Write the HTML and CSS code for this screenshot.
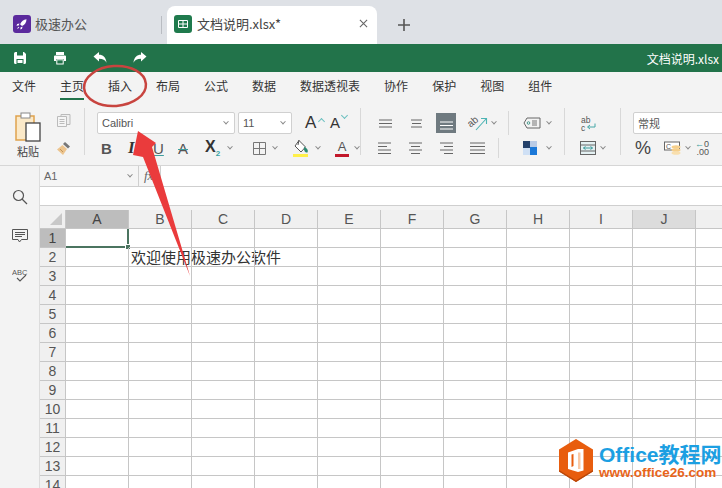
FILE: index.html
```html
<!DOCTYPE html>
<html lang="zh">
<head>
<meta charset="utf-8">
<title>文档说明.xlsx</title>
<link rel="stylesheet" href="styles.css">
</head>
<body>
<div class="app">
  <header class="tabs">
    <div class="tab-home">
      <svg class="tab-icon" viewBox="0 0 18 18"><rect width="18" height="18" rx="3" fill="#5b2a9d"/><path d="M13.5 4.2c-3 .3-5 2.2-6.400 5l1.900 1.900c2.700-1.400 4.500-3.600 4.500-6.900zM6.500 8.500l-2.300.6-.7 1.600 2.200-.1zM9.600 11.600l-.6 2.200-1.600.8.100-2.200zM5.300 11.800l-1.300 2.300 2.300-1.300z" fill="#fff"/></svg>
      <span>极速办公</span>
    </div>
    <div class="tab-sep"></div>
    <div class="tab-doc">
      <svg class="tab-icon" viewBox="0 0 18 18"><rect width="18" height="18" rx="3" fill="#1f7a4d"/><path d="M4.500 5.500h9v7h-9zM9 5.500v7M4.500 9h9" fill="none" stroke="#fff" stroke-width="1"/></svg>
      <span class="tab-title">文档说明.xlsx*</span>
      <svg class="tab-close" viewBox="0 0 10 10"><path d="M1 1l8 8M9 1l-8 8" stroke="#666" stroke-width="1.200"/></svg>
    </div>
    <svg class="tab-add" viewBox="0 0 14 14"><path d="M7 1v12M1 7h12" stroke="#555" stroke-width="1.600"/></svg>
  </header>

  <div class="quick">
    <svg class="q-icon" viewBox="0 0 14 14"><path d="M1 2.500A1.500 1.500 0 0 1 2.500 1H11l2 2v8.500a1.500 1.500 0 0 1-1.500 1.500h-9A1.500 1.500 0 0 1 1 11.500z" fill="#fff"/><rect x="4" y="1" width="6" height="3.500" fill="#22734a"/><rect x="3.500" y="8" width="7" height="5" fill="#22734a"/><rect x="4.500" y="9" width="5" height="3" fill="#fff"/></svg>
    <svg class="q-icon" viewBox="0 0 14 14"><rect x="3" y="1" width="8" height="3" fill="#fff"/><path d="M1 5.500A1 1 0 0 1 2 4.500h10a1 1 0 0 1 1 1V10h-2V8H3v2H1z" fill="#fff"/><rect x="3.800" y="8.800" width="6.400" height="4.200" fill="none" stroke="#fff"/></svg>
    <svg class="q-icon" viewBox="0 0 14 14"><path d="M0.500 5.500L6 1v2.800c4 0 7 2.400 7.500 8-1.500-3-3.500-4-7.500-4v2.700z" fill="#fff"/></svg>
    <svg class="q-icon" viewBox="0 0 14 14"><path d="M13.500 5.500L8 1v2.800c-4 0-7 2.400-7.500 8 1.500-3 3.500-4 7.500-4v2.700z" fill="#fff"/></svg>
    <span class="quick-title">文档说明.xlsx</span>
  </div>

  <nav class="menu">
    <span>文件</span>
    <span class="active">主页</span>
    <span class="strong">插入</span>
    <span>布局</span>
    <span>公式</span>
    <span>数据</span>
    <span>数据透视表</span>
    <span>协作</span>
    <span>保护</span>
    <span>视图</span>
    <span>组件</span>
  </nav>

  <section class="ribbon">
    <div class="group g-paste">
      <div class="paste">
        <svg class="paste-icon" viewBox="0 0 28 30"><path d="M2 4h18v24H2z" fill="#fbe9c8" stroke="#e0a24d" stroke-width="1.500"/><rect x="7" y="1" width="9" height="5" fill="#fff" stroke="#888"/><rect x="12" y="11" width="14" height="18" fill="#fff" stroke="#444" stroke-width="1.300"/></svg>
        <span>粘贴</span>
      </div>
      <div class="paste-side">
        <svg class="i15" viewBox="0 0 15 15"><path d="M5 1.500h9v10H5z" fill="#eee" stroke="#bbb"/><path d="M1.500 3.500h9v10h-9z" fill="#f5f5f5" stroke="#bbb"/><path d="M3.500 6.500h5M3.500 8.500h5M3.500 10.500h5" stroke="#bbb"/></svg>
        <svg class="i15" viewBox="0 0 15 15"><path d="M9 1l5 4.500-2 2-5-4.500z" fill="#777"/><path d="M6.500 4l4.500 4-4 6-6-5.500z" fill="#ecc48e"/><path d="M4 8l3 3" stroke="#c2955a"/></svg>
      </div>
    </div>
    <div class="vsep"></div>

    <div class="group g-font">
      <div class="row r-top">
        <div class="field font-name">Calibri<i class="caret"></i></div>
        <div class="field font-size">11<i class="caret"></i></div>
        <span class="grow">A<i class="grow-mark up"></i></span>
        <span class="grow small">A<i class="grow-mark down"></i></span>
      </div>
      <div class="row r-bot font-tools">
        <b class="t-b">B</b>
        <i class="t-i">I</i>
        <span class="t-u">U</span>
        <span class="t-s">A</span>
        <span class="t-x">X<sub>2</sub></span><i class="caret c-x"></i>
        <svg class="i13 t-border" viewBox="0 0 13 13"><path d="M.5.500h12v12H.5zM6.500.500v12M.5 6.500h12" fill="none" stroke="#777"/></svg><i class="caret c-b"></i>
        <svg class="t-fill" viewBox="0 0 18 18"><path d="M7 1.500l6.500 6.500-4.500 5-6-6z" fill="#fff" stroke="#555"/><path d="M7 1l-1 5" stroke="#555"/><path d="M12 8c3 1 4.500 3 3.500 5.500-2 .5-4-1.500-3.500-5.500z" fill="#2c8a73"/><rect x="1" y="15" width="15" height="3" fill="#fff04a"/></svg><i class="caret c-f"></i>
        <span class="t-color">A</span><i class="caret c-c"></i>
      </div>
    </div>
    <div class="vsep"></div>

    <div class="group g-align">
      <div class="row r-top">
        <svg class="i15 a1" viewBox="0 0 15 15"><path d="M1 4h13M1 7.500h13M1 11h13" stroke="#666"/></svg>
        <svg class="i15 a2" viewBox="0 0 15 15"><path d="M2 4h11M3 7.500h9M2 11h11" stroke="#666"/></svg>
        <span class="a-on"><svg class="i15" viewBox="0 0 15 15"><path d="M1 6h13M1 9.500h13M1 13h13" stroke="#fff"/></svg></span>
        <svg class="a-rot" viewBox="0 0 22 18"><text x="1" y="11" font-size="10" fill="#555" transform="rotate(-40 6 9)" font-family="Liberation Sans">ab</text><path d="M9 16L19 5M14 4.500h5.500V10" fill="none" stroke="#4db4b4" stroke-width="1.100"/></svg><i class="caret c-a"></i>
      </div>
      <div class="row r-bot">
        <svg class="i15 a0" viewBox="0 0 15 15"><path d="M1 2h13M1 5.500h9M1 9h13M1 12.500h13" stroke="#666"/></svg>
        <svg class="i15 a3" viewBox="0 0 15 15"><path d="M1 2h13M3 5.500h9M1 9h13M3 12.500h9" stroke="#666"/></svg>
        <svg class="i15 a3" viewBox="0 0 15 15"><path d="M1 2h13M5 5.500h9M1 9h13M5 12.500h9" stroke="#666"/></svg>
        <svg class="i15 a3" viewBox="0 0 15 15"><path d="M0 2h16M0 5.500h16M0 9h16M0 12.500h16" stroke="#666"/></svg>
        <span class="row-sep"></span>
      </div>
    </div>
    <div class="vsep v-short"></div>

    <div class="group g-cond">
      <div class="row r-top">
        <svg class="t-tag" viewBox="0 0 18 12"><path d="M4 1h13v10H4L1 6z" fill="none" stroke="#666"/><circle cx="5.500" cy="6" r="1.300" fill="none" stroke="#4a9a8e"/><path d="M9 4h5M9 6h5M9 8h5" stroke="#777"/></svg><i class="caret c-g"></i>
      </div>
      <div class="row r-bot">
        <svg class="t-sq" viewBox="0 0 14 14"><rect width="7" height="7" fill="#24416b"/><rect x="7" width="7" height="7" fill="#b9cbe6"/><rect y="7" width="7" height="7" fill="#cfe0f5"/><rect x="7" y="6" width="7" height="8" fill="#1b78d8"/></svg><i class="caret c-g2"></i>
      </div>
    </div>
    <div class="vsep"></div>

    <div class="group g-wrap">
      <div class="row r-top">
        <svg class="t-abc" viewBox="0 0 16 17"><text x="1" y="7.500" font-size="8.500" fill="#555" font-family="Liberation Sans">ab</text><text x="1" y="15.500" font-size="8.500" fill="#555" font-family="Liberation Sans">c</text><path d="M15 8.500v3.500H8M10 10l-2.500 2 2.500 2" fill="none" stroke="#45a6a6"/></svg>
      </div>
      <div class="row r-bot">
        <svg class="t-merge" viewBox="0 0 16 14"><rect x=".5" y=".5" width="15" height="13" fill="#e4f1f3" stroke="#666"/><path d="M.5 4h15M.5 10h15" stroke="#666"/><path d="M3.500 7h9M3.500 7l2-1.500M3.500 7l2 1.500M12.500 7l-2-1.500M12.500 7l-2 1.500" stroke="#3a9a9a" fill="none"/></svg><i class="caret c-g3"></i>
      </div>
    </div>
    <div class="vsep"></div>

    <div class="group g-num">
      <div class="row r-top">
        <div class="field num-format">常规</div>
      </div>
      <div class="row r-bot">
        <span class="t-pct">%</span>
        <svg class="t-cur" viewBox="0 0 17 14"><rect x=".5" y="1" width="15" height="8" fill="#fff" stroke="#666"/><text x="2" y="8" font-size="7" fill="#555" font-family="Liberation Sans">C</text><ellipse cx="12" cy="6" rx="4.500" ry="1.800" fill="#f5cf8c"/><ellipse cx="12" cy="9" rx="4.500" ry="1.800" fill="#f5cf8c"/><ellipse cx="12" cy="12" rx="4.500" ry="1.800" fill="#f9dfae"/></svg><i class="caret c-n"></i>
        <span class="t-dec"><span class="dec-top"><em>←</em>0</span><span>.00</span></span>
      </div>
    </div>
  </section>

  <main class="work">
    <aside class="side">
      <svg class="s-icon" viewBox="0 0 16 16"><circle cx="6.500" cy="6.500" r="5" fill="none" stroke="#555" stroke-width="1.200"/><path d="M10 10l5 5" stroke="#555" stroke-width="1.200"/></svg>
      <svg class="s-icon" viewBox="0 0 16 16"><path d="M.5 1.500h15v10H9.500L7.500 14 6 11.500H.5z" fill="none" stroke="#555"/><path d="M3 4.500h10M3 6.500h10M3 8.500h7" stroke="#555"/></svg>
      <svg class="s-icon" viewBox="0 0 16 16"><text x="0" y="8" font-size="7.500" fill="#555" font-family="Liberation Sans">ABC</text><path d="M5 11l3 3 6-6" fill="none" stroke="#555" stroke-width="1.100"/></svg>
    </aside>

    <div class="sheet">
      <div class="formula">
        <div class="formula-top">
          <div class="name-box">A1<i class="caret"></i></div>
          <div class="fx"><i>fx</i></div>
        </div>
        <div class="formula-body"></div>
      </div>
      <div class="band"></div>
      <table class="grid">
        <colgroup><col class="c-head"><col class="c-col"><col class="c-col"><col class="c-col"><col class="c-col"><col class="c-col"><col class="c-col"><col class="c-col"><col class="c-col"><col class="c-col"><col class="c-col"><col class="c-col"></colgroup>
        <thead>
          <tr><th class="corner"><svg class="corner-mark" viewBox="0 0 12 12"><path d="M12 0v12H0z" fill="#c8c8c8"/></svg></th><th class="sel">A</th><th>B</th><th>C</th><th>D</th><th>E</th><th>F</th><th>G</th><th>H</th><th>I</th><th class="hover">J</th><th></th></tr>
        </thead>
        <tbody>
          <tr><th class="sel">1</th><td class="active-cell"><span class="handle"></span></td><td></td><td></td><td></td><td></td><td></td><td></td><td></td><td></td><td></td><td></td></tr>
          <tr><th>2</th><td></td><td class="overflow">欢迎使用极速办公软件</td><td></td><td></td><td></td><td></td><td></td><td></td><td></td><td></td><td></td></tr>
          <tr><th>3</th><td></td><td></td><td></td><td></td><td></td><td></td><td></td><td></td><td></td><td></td><td></td></tr>
          <tr><th>4</th><td></td><td></td><td></td><td></td><td></td><td></td><td></td><td></td><td></td><td></td><td></td></tr>
          <tr><th>5</th><td></td><td></td><td></td><td></td><td></td><td></td><td></td><td></td><td></td><td></td><td></td></tr>
          <tr><th>6</th><td></td><td></td><td></td><td></td><td></td><td></td><td></td><td></td><td></td><td></td><td></td></tr>
          <tr><th>7</th><td></td><td></td><td></td><td></td><td></td><td></td><td></td><td></td><td></td><td></td><td></td></tr>
          <tr><th>8</th><td></td><td></td><td></td><td></td><td></td><td></td><td></td><td></td><td></td><td></td><td></td></tr>
          <tr><th>9</th><td></td><td></td><td></td><td></td><td></td><td></td><td></td><td></td><td></td><td></td><td></td></tr>
          <tr><th>10</th><td></td><td></td><td></td><td></td><td></td><td></td><td></td><td></td><td></td><td></td><td></td></tr>
          <tr><th>11</th><td></td><td></td><td></td><td></td><td></td><td></td><td></td><td></td><td></td><td></td><td></td></tr>
          <tr><th>12</th><td></td><td></td><td></td><td></td><td></td><td></td><td></td><td></td><td></td><td></td><td></td></tr>
          <tr><th>13</th><td></td><td></td><td></td><td></td><td></td><td></td><td></td><td></td><td></td><td></td><td></td></tr>
          <tr><th>14</th><td></td><td></td><td></td><td></td><td></td><td></td><td></td><td></td><td></td><td></td><td></td></tr>
        </tbody>
      </table>
    </div>
  </main>

  <svg class="annot" viewBox="0 0 722 488">
    <ellipse cx="115" cy="86" rx="31" ry="20" transform="rotate(-4 115 86)" fill="none" stroke="#c8443f" stroke-width="2.500"/>
    <path d="M138 131L156 143 152 147 190 276 143 157 133 155z" fill="#ea3b3c"/>
  </svg>

  <div class="mark">
    <svg class="mark-hex" viewBox="0 0 34 43"><path d="M17 0l17 10.500v22L17 43 0 32.500v-22z" fill="#e85d0e"/><path d="M17 43L0 32.500v-1.500l17 10.500 17-10.500v1.500z" fill="#b8470a"/><path d="M9 13.500L19 10h5.500v21.500L19 33 9 30V13.500zM12.500 15.500V28l2-1V15z" fill="#fff" fill-rule="evenodd"/><path d="M19 13.500h2.500v16.500H19z" fill="#f9c9a6"/></svg>
    <div class="mark-text">
      <span class="mark-name">Office教程网</span>
      <span class="mark-url">www.office26.com</span>
    </div>
  </div>
</div>
</body>
</html>
```

FILE: styles.css
```css
* { box-sizing: border-box; }
html, body { margin: 0; padding: 0; }
body {
  width: 722px;
  height: 488px;
  overflow: hidden;
  background: #fff;
  font-family: "Noto Sans CJK SC", "Liberation Sans", sans-serif;
  color: #333;
}
i, em { font-style: normal; }
svg { display: block; flex: none; }
.app { position: relative; width: 722px; height: 488px; overflow: hidden; }

/* tab strip */
.tabs {
  display: flex;
  align-items: flex-end;
  height: 44px;
  background: #dee1e6;
}
.tab-icon { width: 18px; height: 18px; }
.tab-home {
  display: flex;
  align-items: center;
  gap: 4px;
  width: 161px;
  height: 38px;
  padding: 0 0 3px 13px;
  font-size: 13px;
  color: #555;
}
.tab-sep { width: 1px; height: 18px; margin: 0 5px 10px 0; background: #b9bcc2; }
.tab-doc {
  display: flex;
  align-items: center;
  gap: 5px;
  width: 210px;
  height: 38px;
  padding: 0 9px 3px 7px;
  background: #fff;
  border-radius: 8px 8px 0 0;
  font-size: 13px;
  color: #444;
}
.tab-title { flex: 1; }
.tab-close { width: 9px; height: 9px; }
.tab-add { width: 14px; height: 14px; margin: 0 0 12px 20px; }

/* quick access bar */
.quick {
  display: flex;
  align-items: center;
  gap: 26px;
  height: 28px;
  padding: 0 3px 0 13px;
  background: #22734a;
}
.q-icon { width: 14px; height: 14px; }
.quick-title { margin-left: auto; font-size: 12px; color: #fff; }

/* menu */
.menu {
  display: flex;
  gap: 24px;
  height: 28px;
  padding: 0 12px;
  background: #f3f3f3;
  font-size: 12px;
  line-height: 27px;
  color: #333;
}
.menu span { height: 28px; }
.menu .active { border-bottom: 2px solid #22734a; }

/* ribbon */
.ribbon {
  display: flex;
  height: 66px;
  padding-top: 8px;
  background: #f3f3f3;
  border-bottom: 1px solid #d6d6d6;
}
.vsep { flex: none; width: 1px; height: 47px; background: #d8d8d8; }
.v-short { height: 24px; margin-top: 3px; }
.group { flex: none; }
.row { display: flex; align-items: center; }
.r-top { height: 22px; margin-top: 4px; }
.r-bot { height: 16px; margin-top: 6px; }
.i13 { width: 13px; height: 13px; }
.i15 { width: 15px; height: 15px; }
.caret {
  display: block;
  flex: none;
  width: 4px;
  height: 4px;
  border-right: 1px solid #888;
  border-bottom: 1px solid #888;
  transform: rotate(45deg) translate(-1px, -1px);
}

.g-paste { display: flex; width: 84px; padding-left: 14px; }
.paste { width: 28px; font-size: 11px; line-height: 13px; text-align: center; color: #444; }
.paste-icon { width: 28px; height: 30px; margin: 4px 0 3px; }
.paste-side { display: flex; flex-direction: column; gap: 13px; margin: 5px 0 0 14px; }

.g-font { width: 275px; padding-left: 12px; }
.field {
  display: flex;
  flex: none;
  align-items: center;
  height: 22px;
  padding-left: 4px;
  background: #fff;
  border: 1px solid #d0d0d0;
  border-radius: 2px;
  font-family: "Liberation Sans", "Noto Sans CJK SC", sans-serif;
  font-size: 11px;
  color: #555;
}
.field .caret { margin-left: auto; margin-right: 6px; }
.font-name { width: 138px; }
.font-size { width: 54px; margin-left: 3px; }
.grow {
  position: relative;
  width: 25px;
  margin-left: 13px;
  font-family: "Liberation Sans", sans-serif;
  font-size: 17px;
  line-height: 20px;
  color: #333;
}
.grow.small { margin-left: 0; font-size: 15px; }
.grow-mark {
  position: absolute;
  left: 14px;
  top: 3px;
  width: 5px;
  height: 5px;
  border-right: 1px solid #6cc0c0;
  border-bottom: 1px solid #6cc0c0;
}
.grow-mark.up { transform: rotate(225deg); top: 6px; }
.grow-mark.down { transform: rotate(45deg); left: 12px; top: 0; }
.font-tools {
  font-family: "Liberation Sans", sans-serif;
  font-size: 15px;
  color: #555;
}
.t-b { margin-left: 4px; font-size: 15px; width: 27px; color: #555; }
.t-i { font-family: "Liberation Serif", serif; font-weight: 700; font-style: italic; font-size: 17px; width: 25px; color: #333; }
.t-u { width: 25px; text-decoration: underline; text-decoration-color: #3d9e9e; }
.t-s { width: 27px; text-decoration: line-through; text-decoration-color: #3d9e9e; }
.t-x { font-weight: 700; font-size: 16px; width: 23px; color: #333; }
.t-x sub { font-size: 8px; color: #39a3a3; }
.t-border { margin-left: 21px; }
.c-b { margin-left: 7px; }
.t-fill { width: 18px; height: 18px; margin-left: 15px; }
.c-f { margin-left: 6px; }
.t-color {
  width: 14px;
  margin-left: 15px;
  text-align: center;
  border-bottom: 3px solid #c2182a;
  line-height: 14px;
  font-size: 13px;
}
.c-c { margin-left: 6px; }

.g-align { width: 147px; padding-left: 17px; }
.a0 { margin-left: -1px; }
.a2 { margin-left: 16px; }
.a3 { margin-left: 16px; }
.a-on {
  display: flex;
  align-items: center;
  justify-content: center;
  width: 20px;
  height: 20px;
  margin-left: 12px;
  background: #6f7a80;
}
.a-rot { width: 22px; height: 18px; margin-left: 11px; }
.c-a { margin-left: 3px; }
.row-sep { flex: none; width: 1px; height: 20px; margin-left: 13px; background: #d8d8d8; }

.g-cond { width: 55px; padding-left: 14px; }
.t-tag { width: 18px; height: 12px; }
.c-g { margin-left: 6px; }
.t-sq { width: 14px; height: 14px; }
.c-g2 { margin-left: 10px; }

.g-wrap { width: 55px; padding-left: 15px; }
.t-abc { width: 16px; height: 17px; }
.t-merge { width: 16px; height: 14px; }
.c-g3 { margin-left: 5px; }

.g-num { width: 101px; padding-left: 12px; }
.num-format { width: 100px; font-family: "Noto Sans CJK SC", sans-serif; }
.t-pct { width: 31px; padding-left: 2px; font-family: "Liberation Sans", sans-serif; font-size: 18px; color: #444; }
.t-cur { width: 17px; height: 14px; }
.c-n { margin-left: 5px; }
.t-dec {
  display: flex;
  flex-direction: column;
  align-items: flex-end;
  margin-left: 5px;
  font-family: "Liberation Sans", sans-serif;
  font-size: 9px;
  line-height: 8px;
  color: #555;
}
.t-dec em { color: #3d9e9e; }

/* main area */
.work { display: flex; height: 322px; }
.side {
  display: flex;
  flex-direction: column;
  align-items: center;
  gap: 23px;
  flex: none;
  width: 40px;
  padding-top: 23px;
  background: #f3f3f3;
  border-right: 1px solid #dcdcdc;
}
.s-icon { width: 16px; height: 16px; }
.sheet { flex: 1; min-width: 0; }
.formula-top {
  display: flex;
  height: 21px;
  border-bottom: 1px solid #cfcfcf;
}
.name-box {
  display: flex;
  align-items: center;
  width: 99px;
  padding-left: 4px;
  background: #f5f5f5;
  border-right: 1px solid #cfcfcf;
  font-family: "Liberation Sans", sans-serif;
  font-size: 11px;
  color: #666;
}
.name-box .caret { margin-left: auto; margin-right: 6px; }
.fx {
  width: 22px;
  padding-left: 5px;
  background: #f5f5f5;
  border-right: 1px solid #cfcfcf;
  font-family: "Liberation Serif", serif;
  font-size: 13px;
  line-height: 20px;
  color: #666;
}
.fx i { font-style: italic; }
.formula-body { height: 18px; }
.band {
  height: 5px;
  background: #f3f3f3;
  border-top: 1px solid #cfcfcf;
}

/* grid */
.grid {
  table-layout: fixed;
  border-collapse: separate;
  border-spacing: 0;
  width: 682px;
}
.c-head { width: 26px; }
.c-col { width: 63px; }
.grid tr { height: 19px; }
.grid th, .grid td {
  height: 19px;
  padding: 0;
  border-right: 1px solid #c6c6c6;
  border-bottom: 1px solid #c6c6c6;
}
.grid th {
  background: #f0f0f0;
  font-family: "Liberation Sans", sans-serif;
  font-size: 14px;
  font-weight: 400;
  color: #555;
  text-align: center;
  line-height: 18px;
}
.grid td { position: relative; }
.grid th.sel { background: #bdbdbd; color: #444; }
.grid th.hover { background: #dcdcdc; }
.corner { position: relative; }
.corner-mark { position: absolute; right: 3px; bottom: 3px; width: 12px; height: 12px; }
.grid .active-cell {
  border-right: 2px solid #4b7460;
  border-bottom: 2px solid #4b7460;
}
.handle {
  position: absolute;
  right: -4px;
  bottom: -4px;
  width: 6px;
  height: 6px;
  background: #4b7460;
  border: 1px solid #fff;
}
.grid .overflow {
  padding-left: 2px;
  font-size: 15px;
  line-height: 18px;
  white-space: nowrap;
  overflow: visible;
  color: #333;
}

/* overlays */
.annot { position: absolute; left: 0; top: 0; width: 722px; height: 488px; pointer-events: none; }
.mark {
  position: absolute;
  left: 559px;
  top: 439px;
  display: flex;
  gap: 7px;
}
.mark-hex { width: 34px; height: 43px; }
.mark-text { display: flex; flex-direction: column; margin-left: -1px; }
.mark-name {
  margin-top: 4px;
  font-family: "Liberation Sans", "Noto Sans CJK SC", sans-serif;
  font-size: 21px;
  font-weight: 700;
  line-height: 23px;
  color: #1c9fe2;
  white-space: nowrap;
}
.mark-url {
  font-family: "Liberation Sans", sans-serif;
  font-size: 13.500px;
  font-weight: 700;
  line-height: 14px;
  color: #e8651a;
  white-space: nowrap;
}
```
